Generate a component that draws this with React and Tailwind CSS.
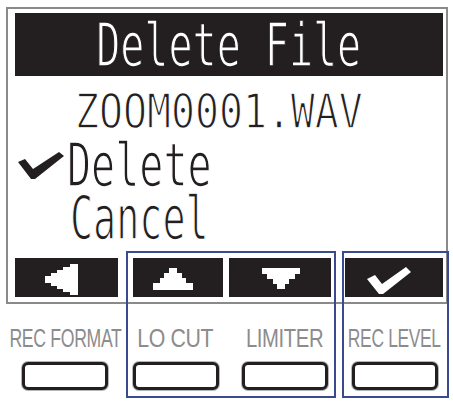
import React from "react";

const lcd = "font-['DejaVu_Sans_Mono',monospace] whitespace-nowrap";

function LeftArrow() {
  return (
    <svg width="103" height="39" viewBox="0 0 103 39" shapeRendering="crispEdges">
      <path
        fill="#fff"
        d="M30 18h6v-3h6v-3h6v-3h7v-3h8v31h-8v-3h-7v-3h-6v-3h-6v-3h-6z"
      />
    </svg>
  );
}

function UpArrow() {
  return (
    <svg width="90" height="39" viewBox="0 0 90 39" shapeRendering="crispEdges">
      <path fill="#fff" d="M36 10h8v5h5v5h4v5h7v7H20v-7h7v-5h4v-5h5z" />
    </svg>
  );
}

function DownArrow() {
  return (
    <svg width="102" height="39" viewBox="0 0 102 39" shapeRendering="crispEdges">
      <path fill="#fff" d="M33 10h38v6h-5v5h-6v5h-4v5h-8v-5h-4v-5h-6v-5h-5z" />
    </svg>
  );
}

function EnterCheck() {
  return (
    <svg width="98" height="39" viewBox="0 0 98 39">
      <path d="M22 21 L30 17 L37 26 L61 9 L66 14 L38 36 L34 36 Z" fill="#fff" />
    </svg>
  );
}

export default function App() {
  const labels = [
    { text: "REC FORMAT", w: "w-[130px]", scale: "scale-x-[0.68]" },
    { text: "LO CUT", w: "w-[91px]", scale: "scale-x-[0.82]" },
    { text: "LIMITER", w: "w-[127px]", scale: "scale-x-[0.78]" },
    { text: "REC LEVEL", w: "w-[93px]", scale: "scale-x-[0.67]" },
  ];

  return (
    <div className="relative w-[453px] h-[407px] bg-white overflow-hidden pt-[7px]">
      {/* LCD screen */}
      <div className="ml-[6px] w-[442px] h-[297px] border-2 border-[#8a8a8a] flex flex-col">
        <div className="mt-[4px] ml-[7px] w-[428px] h-[63px] bg-[#231f20] flex items-center justify-center">
          <span className={`${lcd} leading-none text-[60px] text-white [-webkit-text-stroke:1.6px_#231f20] inline-block scale-x-[0.667]`}>Delete File</span>
        </div>

        <div className="mt-[11px] ml-[67px] h-[48px]">
          <span className={`${lcd} leading-none text-[48px] text-[#231f20] [-webkit-text-stroke:1.4px_#fff] inline-block origin-left scale-x-[0.83]`}>ZOOM0001.WAV</span>
        </div>

        <div className="mt-[4px] h-[53px] flex items-start">
          <svg className="ml-[10px] mt-[13px]" width="46" height="28" viewBox="0 0 46 28">
            <path d="M0 10 L7 7 L15 17 L41 0 L46 4 L17 27 L13 27 Z" fill="#231f20" />
          </svg>
          <span className={`${lcd} ml-[3px] leading-[53px] text-[60px] text-[#231f20] [-webkit-text-stroke:1.6px_#fff] inline-block origin-left scale-x-[0.667]`}>Delete</span>
        </div>

        <div className="ml-[62px] h-[53px]">
          <span className={`${lcd} leading-[53px] text-[60px] text-[#231f20] [-webkit-text-stroke:1.6px_#fff] inline-block origin-left scale-x-[0.64]`}>Cancel</span>
        </div>

        <div className="mt-auto mb-[5px] ml-[7px] flex h-[39px]">
          <div className="w-[103px] bg-[#231f20]">
            <LeftArrow />
          </div>
          <div className="ml-[15px] w-[90px] bg-[#231f20]">
            <UpArrow />
          </div>
          <div className="ml-[6px] w-[102px] bg-[#231f20]">
            <DownArrow />
          </div>
          <div className="ml-[14px] w-[98px] bg-[#231f20]">
            <EnterCheck />
          </div>
        </div>
      </div>

      {/* function keys */}
      <div className="mt-[21px] flex">
        {labels.map((l) => (
          <div key={l.text} className={`${l.w} flex flex-col items-center`}>
            <div className="h-[26px] flex justify-center">
              <span
                className={`inline-block whitespace-nowrap leading-none text-[26px] tracking-[-0.5px] text-[#8c8c8c] font-['Liberation_Sans',Arial,sans-serif] ${l.scale}`}
              >
                {l.text}
              </span>
            </div>
            <div className="mt-[11px] w-[86px] h-[28px] rounded-[6px] border-[3px] border-[#231f20] bg-white shadow-[0_0_0_1px_#b5b5b5]" />
          </div>
        ))}
      </div>

      {/* highlight outlines */}
      <div className="absolute left-[126px] top-[251px] w-[210px] h-[147px] border-2 border-[#3a4a8e]" />
      <div className="absolute left-[342px] top-[251px] w-[107px] h-[147px] border-2 border-[#3a4a8e]" />
    </div>
  );
}
